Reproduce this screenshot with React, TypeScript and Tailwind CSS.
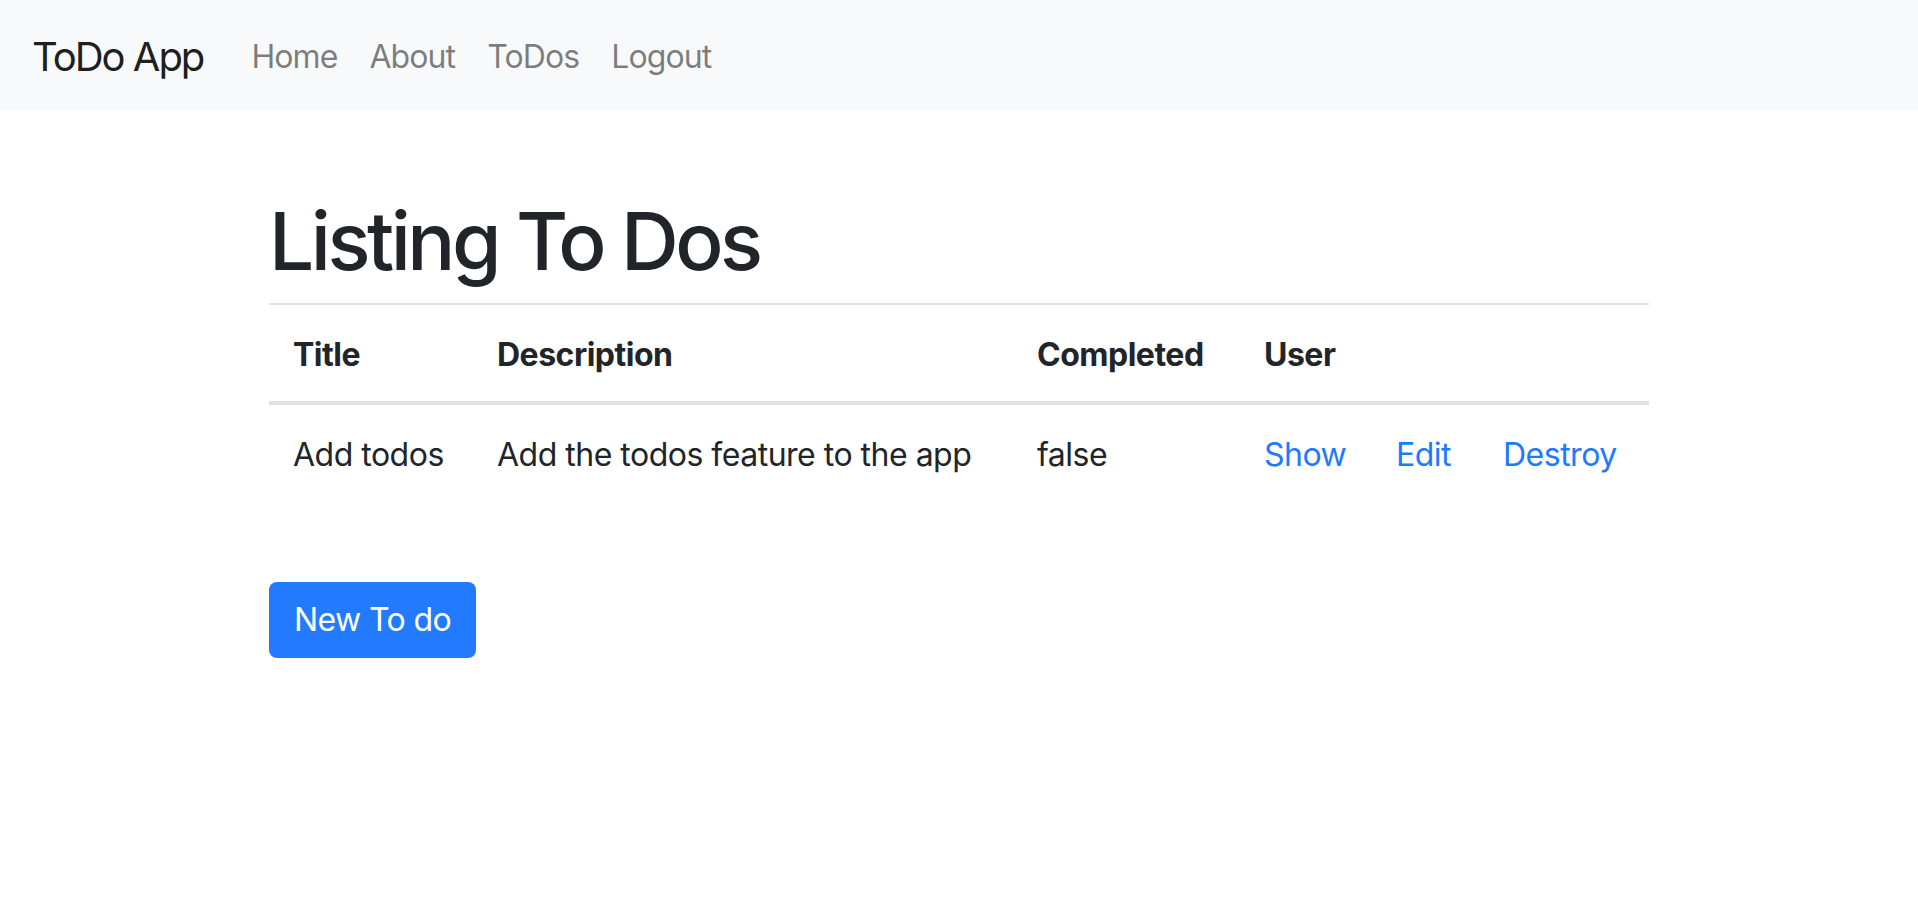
import React from "react";

const navLinks = ["Home", "About", "ToDos", "Logout"];

const App: React.FC = () => {
  return (
    <div className=" min-h-[908px] bg-white text-[#212529] font-['Inter','Liberation_Sans',sans-serif]">
      <nav className=" h-[111px] bg-[#f8f9fa] flex items-center px-[32px] pt-[2px]">
        <a className=" text-[40px] leading-[60px] tracking-[-2px] text-black/90 mr-[32px]">ToDo App</a>
        <div className=" flex items-center">
          {navLinks.map((link) => (
            <a key={link} className=" px-[16px] text-[32px] leading-[48px] tracking-[-0.9px] text-black/50">
              {link}
            </a>
          ))}
        </div>
      </nav>

      <div className=" w-[1380px] mx-auto pt-[82px]">
        <h1 className=" text-[80px] leading-[96px] font-medium mb-[14px] tracking-[-3.5px]">
          Listing To Dos
        </h1>

        <table className=" w-full text-[32px] leading-[48px] tracking-[-0.5px] border-collapse table-fixed mb-[32px]">
          <colgroup>
            <col className=" w-[204px]" />
            <col className=" w-[540px]" />
            <col className=" w-[227px]" />
            <col className=" w-[132px]" />
            <col className=" w-[107px]" />
            <col className=" w-[170px]" />
          </colgroup>
          <thead>
            <tr>
              <th className=" text-left font-bold px-[24px] pt-[26px] pb-[22px] border-t-2 border-b-4 border-[#dee2e6]">Title</th>
              <th className=" text-left font-bold px-[24px] pt-[26px] pb-[22px] border-t-2 border-b-4 border-[#dee2e6]">Description</th>
              <th className=" text-left font-bold px-[24px] pt-[26px] pb-[22px] border-t-2 border-b-4 border-[#dee2e6]">Completed</th>
              <th className=" text-left font-bold px-[24px] pt-[26px] pb-[22px] border-t-2 border-b-4 border-[#dee2e6]">User</th>
              <th colSpan={2} className=" px-[24px] pt-[26px] pb-[22px] border-t-2 border-b-4 border-[#dee2e6]"></th>
            </tr>
          </thead>
          <tbody>
            <tr>
              <td className=" p-[24px] pt-[26px]">Add todos</td>
              <td className=" p-[24px] pt-[26px]">Add the todos feature to the app</td>
              <td className=" p-[24px] pt-[26px]">false</td>
              <td className=" p-[24px] pt-[26px] text-[#1f7aff]">Show</td>
              <td className=" p-[24px] pt-[26px] text-[#1f7aff]">Edit</td>
              <td className=" p-[24px] pt-[26px] text-[#1f7aff]">Destroy</td>
            </tr>
          </tbody>
        </table>

        <br />
        <button className=" mt-[23px] h-[76px] px-[25px] rounded-[8px] bg-[#227bff] text-white text-[32px] leading-[48px] tracking-[-0.6px]">
          New To do
        </button>
      </div>
    </div>
  );
};

export default App;
